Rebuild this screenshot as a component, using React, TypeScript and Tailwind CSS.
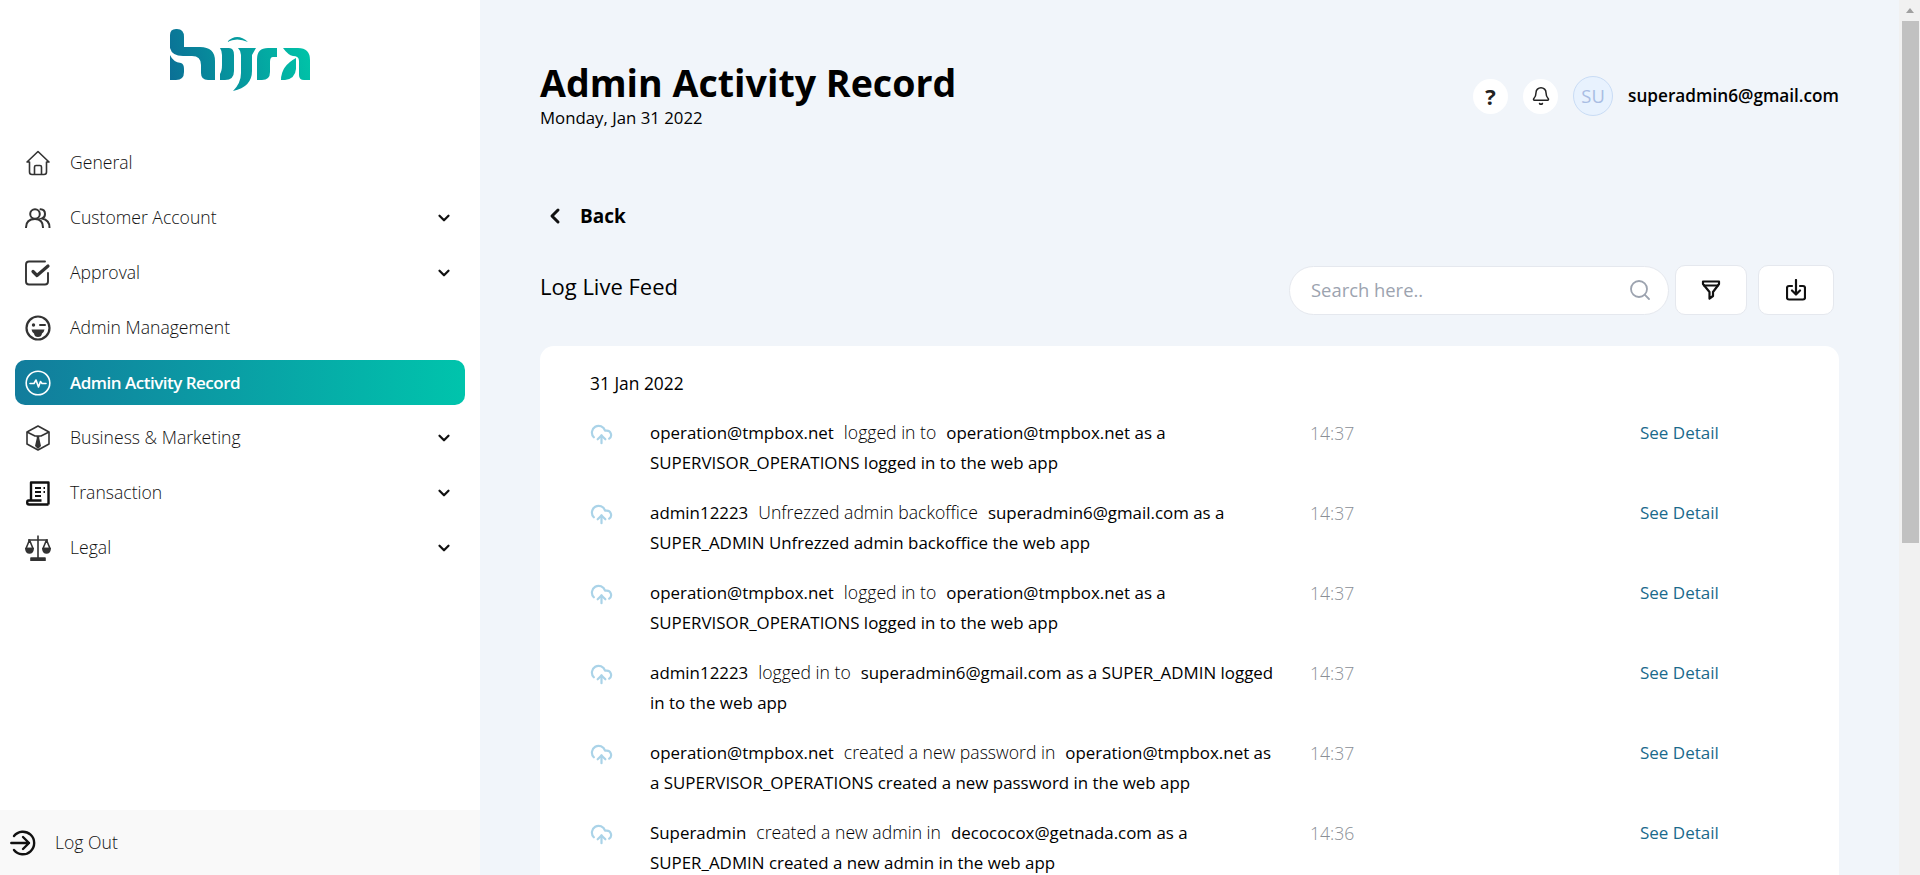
import { Bell, ChevronDown, ChevronLeft, CloudUpload, Search } from "lucide-react";
import type { ReactNode } from "react";

function Logo() {
  return (
    <svg width="140" height="62" viewBox="0 0 140 62" fill="url(#hijraGrad)">
      <defs>
        <linearGradient id="hijraGrad" gradientUnits="userSpaceOnUse" x1="0" y1="50" x2="140" y2="20">
          <stop offset="0" stopColor="#0b7096" />
          <stop offset="1" stopColor="#00c4a8" />
        </linearGradient>
      </defs>
      {/* h */}
      <path d="M0 6 Q0 0 6 0 L7 0 Q14 0 14 8 L14 18 L30 18 Q45 18 45 32 L45 51 L38 51 Q31 51 31 44 L31 36 Q31 27 22 27 L13 27 Q2 27 0 19 Z" />
      <path d="M0 26 Q3 33 11 34 Q14 35 14 40 L14 43 Q14 51 6 51 L0 51 Z" />
      {/* i */}
      <path d="M50 51 L50 45 Q52 42 52 36 L52 26 Q52 22 50 19 L59 19 Q64 19 64 26 L64 42 Q64 51 55 51 Z" />
      {/* dome */}
      <path d="M57 13 Q67 3 78 13 Q67 8 57 13 Z" />
      {/* j */}
      <path d="M68 19 L86 19 L82 26 L82 42 Q82 58 63 62 Q71 54 71 44 L71 26 Q71 22 68 19 Z" />
      {/* r */}
      <path d="M87 51 L87 30 Q87 19 98 19 L107 19 L107 28 L103 28 Q100 28 100 33 L100 43 Q100 51 92 51 Z" />
      {/* a */}
      <path d="M113 19 L128 19 Q140 19 140 31 L140 51 L134 51 Q129 51 129 46 L129 32 Q129 27 123 27 Q118 26 113 19 Z" />
      <path d="M111 51 Q111 37 126 29 L126 40 Q125 50 115 51 Z" />
    </svg>
  );
}

function HomeIcon() {
  return (
    <svg width="24" height="26" viewBox="0 0 24 26" fill="none" stroke="#333" strokeWidth="1.6" strokeLinejoin="round">
      <path d="M1 12 L12 1.5 L23 12 L20.5 12 L20.5 22 Q20.5 24.5 18 24.5 L6 24.5 Q3.5 24.5 3.5 22 L3.5 12 Z" />
      <path d="M8.5 24.5 L8.5 17 Q8.5 15.5 10 15.5 L14 15.5 Q15.5 15.5 15.5 17 L15.5 24.5" />
    </svg>
  );
}

function UsersIcon() {
  return (
    <svg width="26" height="20" viewBox="0 0 26 20" fill="none" stroke="#333" strokeWidth="2" strokeLinecap="round">
      <circle cx="10" cy="6" r="4.8" />
      <path d="M1 19.5 Q1 11 10 11 Q18 11 18 19.5" />
      <path d="M15.5 1.3 Q20 1.5 20 6 Q20 9.5 17 10.5 Q24.5 12 24.5 19.5" />
    </svg>
  );
}

function CheckBoxIcon() {
  return (
    <svg width="26" height="26" viewBox="0 0 26 26" fill="none" stroke="#333" strokeLinecap="round" strokeLinejoin="round">
      <path strokeWidth="1.9" d="M20 1.5 L4 1.5 Q1 1.5 1 4.5 L1 21.5 Q1 24.5 4 24.5 L20 24.5 Q23 24.5 23 21.5 L23 13" />
      <path strokeWidth="3.2" d="M8 11.5 L12 15.5 L23 6" />
    </svg>
  );
}

function WinkIcon() {
  return (
    <svg width="26" height="26" viewBox="0 0 26 26" fill="none" stroke="#333" strokeWidth="2.2">
      <circle cx="13" cy="13" r="11.5" />
      <circle cx="8.5" cy="10" r="1.7" fill="#333" stroke="none" />
      <path d="M15 10 L20 10" strokeWidth="2" strokeLinecap="round" />
      <path d="M6.5 14.5 L19.5 14.5 Q19 17.5 17 18.5 Q16.5 22 13 22 Q9.5 22 9 18.5 Q7 17.5 6.5 14.5 Z" fill="#333" stroke="none" />
    </svg>
  );
}

function PulseIcon() {
  return (
    <svg width="26" height="26" viewBox="0 0 26 26" fill="none" stroke="#fff" strokeWidth="1.6" strokeLinejoin="round" strokeLinecap="round">
      <circle cx="13" cy="13" r="11.8" />
      <path d="M5 13.5 L9 13.5 L11 10 L13.5 17 L15.5 11.5 L17 13.5 L21 13.5" />
    </svg>
  );
}

function CubeIcon() {
  return (
    <svg width="24" height="26" viewBox="0 0 24 26" fill="none" stroke="#333" strokeWidth="1.6" strokeLinejoin="round">
      <path d="M12 1 L23 7 L23 19 L12 25 L1 19 L1 7 Z" />
      <path d="M1 7 L9 11 L15 11 L23 7" />
      <path d="M10.5 11 L13.5 11 L13.2 13 L15 21 L12 24 L9 21 L10.8 13 Z" fill="#333" stroke="none" />
    </svg>
  );
}

function ReceiptIcon() {
  return (
    <svg width="24" height="26" viewBox="0 0 24 26" fill="none" stroke="#111" strokeWidth="2.4" strokeLinejoin="round">
      <path d="M5 20 L5 2.5 L22.5 2.5 L22.5 24.5" />
      <path d="M15.5 20.5 L2.5 20.5 Q1.2 20.5 1.2 22.5 Q1.2 24.5 3 24.5 L22.5 24.5" />
      <path d="M9 8 L15 8 M17.5 8 L19 8 M9 12 L15 12 M17.5 12 L19 12 M9 16 L15 16" strokeWidth="2" />
    </svg>
  );
}

function ScaleIcon() {
  return (
    <svg width="26" height="26" viewBox="0 0 26 26" fill="none" stroke="#333" strokeWidth="1.6" strokeLinejoin="round">
      <path d="M13 0.5 L13 23 M3 5 L23 5" />
      <path d="M6 23 L20 23 L20 25.5 L6 25.5 Z" fill="#333" />
      <path d="M4.5 5 L1 13.5 L8 13.5 Z M21.5 5 L18 13.5 L25 13.5 Z" />
      <path d="M0.8 13.5 Q1.2 18 4.5 18 Q7.8 18 8.2 13.5 Z M17.8 13.5 Q18.2 18 21.5 18 Q24.8 18 25.2 13.5 Z" fill="#333" />
    </svg>
  );
}

function LogOutIcon() {
  return (
    <svg width="26" height="26" viewBox="0 0 26 26" fill="none" stroke="#111" strokeWidth="2.4" strokeLinecap="round" strokeLinejoin="round">
      <path d="M4 6 A11.3 11.3 0 1 1 4 20" />
      <path d="M1.3 13 L19 13 M13 7 L19 13 L13 19" />
    </svg>
  );
}

function FunnelIcon() {
  return (
    <svg width="20" height="20" viewBox="0 0 20 20" fill="none" stroke="#111" strokeWidth="2.2" strokeLinejoin="round" strokeLinecap="round">
      <path d="M2 1.5 L18 1.5 L18 4 L12 12 L12 16 L8.5 18.5 L8.5 12 L2 4 Z" />
      <path d="M3 5.5 L17 5.5" />
    </svg>
  );
}

function DownloadIcon() {
  return (
    <svg width="20" height="22" viewBox="0 0 20 22" fill="none" stroke="#111" strokeWidth="2.2" strokeLinejoin="round" strokeLinecap="round">
      <path d="M6 7 L3 7 Q1 7 1 9 L1 18.5 Q1 20.5 3 20.5 L17 20.5 Q19 20.5 19 18.5 L19 9 Q19 7 17 7 L14 7" />
      <path d="M10 1 L10 15 M6 11.5 L10 15.5 L14 11.5" />
    </svg>
  );
}

type MenuItem = { label: string; icon: ReactNode; sub?: boolean; active?: boolean };

const menu: MenuItem[] = [
  { label: "General", icon: <HomeIcon /> },
  { label: "Customer Account", icon: <UsersIcon />, sub: true },
  { label: "Approval", icon: <CheckBoxIcon />, sub: true },
  { label: "Admin Management", icon: <WinkIcon /> },
  { label: "Admin Activity Record", icon: <PulseIcon />, active: true },
  { label: "Business & Marketing", icon: <CubeIcon />, sub: true },
  { label: "Transaction", icon: <ReceiptIcon />, sub: true },
  { label: "Legal", icon: <ScaleIcon />, sub: true },
];

const logs = [
  { who: "operation@tmpbox.net", action: "logged in to", rest: "operation@tmpbox.net as a SUPERVISOR_OPERATIONS logged in to the web app", time: "14:37" },
  { who: "admin12223", action: "Unfrezzed admin backoffice", rest: "superadmin6@gmail.com as a SUPER_ADMIN Unfrezzed admin backoffice the web app", time: "14:37" },
  { who: "operation@tmpbox.net", action: "logged in to", rest: "operation@tmpbox.net as a SUPERVISOR_OPERATIONS logged in to the web app", time: "14:37" },
  { who: "admin12223", action: "logged in to", rest: "superadmin6@gmail.com as a SUPER_ADMIN logged in to the web app", time: "14:37" },
  { who: "operation@tmpbox.net", action: "created a new password in", rest: "operation@tmpbox.net as a SUPERVISOR_OPERATIONS created a new password in the web app", time: "14:37" },
  { who: "Superadmin", action: "created a new admin in", rest: "decococox@getnada.com as a SUPER_ADMIN created a new admin in the web app", time: "14:36" },
];

export default function App() {
  return (
    <div className="flex h-screen overflow-hidden bg-[#f1f5fa] font-['Open_Sans',sans-serif] text-black">
      {/* Sidebar */}
      <aside className="flex w-[480px] shrink-0 flex-col bg-white">
        <div className="flex justify-center pt-[29px]">
          <Logo />
        </div>
        <nav className="mt-[49px] flex flex-col gap-[10px] px-[15px]">
          {menu.map((item) => (
            <div
              key={item.label}
              className={`flex h-[45px] items-center rounded-[10px] pl-[10px] pr-[12px] ${
                item.active ? "bg-gradient-to-r from-[#127c9c] to-[#00c4ac] text-white" : "text-[#111]"
              }`}
            >
              <div className="flex w-[26px] justify-center">{item.icon}</div>
              <span
                className={`ml-[19px] flex-1 ${
                  item.active ? "text-[17px] font-semibold tracking-[-0.5px]" : "text-[17.6px] font-light"
                }`}
              >
                {item.label}
              </span>
              {item.sub && <ChevronDown size={18} strokeWidth={3} className="text-[#111]" />}
            </div>
          ))}
        </nav>
        <div className="mt-auto flex h-[65px] items-center bg-[#f9f9f9] pl-[10px]">
          <LogOutIcon />
          <span className="ml-[19px] text-[17.6px] font-light text-[#111]">Log Out</span>
        </div>
      </aside>

      {/* Main */}
      <main className="min-w-0 flex-1 overflow-hidden pl-[60px] pr-[60px]">
        <header className="flex items-start justify-between pt-[58px]">
          <div>
            <h1 className="text-[37.6px] leading-[50px] font-bold">Admin Activity Record</h1>
            <p className="text-[16.8px] leading-[20px]">Monday, Jan 31 2022</p>
          </div>
          <div className="mt-[18px] flex items-center">
            <div className="flex h-[35px] w-[35px] items-center justify-center rounded-full bg-white">
              <span className="text-[22px] leading-none font-bold text-[#222]">?</span>
            </div>
            <div className="ml-[15px] flex h-[35px] w-[35px] items-center justify-center rounded-full bg-white">
              <Bell size={20} strokeWidth={1.8} className="text-[#222]" />
            </div>
            <div className="ml-[15px] flex h-[40px] w-[40px] items-center justify-center rounded-full border border-[#c9dcf5] bg-[#e8f2fe] text-[18.4px] text-[#a9bde3]">
              SU
            </div>
            <span className="ml-[15px] text-[17.2px] font-semibold">superadmin6@gmail.com</span>
          </div>
        </header>

        <div className="mt-[74px] flex h-[28px] items-center pl-[3px]">
          <ChevronLeft size={24} strokeWidth={3} className="text-[#111]" />
          <span className="ml-[13px] text-[19px] font-bold">Back</span>
        </div>

        <div className="mt-[35px] flex items-start justify-between">
          <h2 className="text-[22px] leading-[42px] font-normal">Log Live Feed</h2>
          <div className="flex items-center pr-[5px]">
            <div className="flex h-[49px] w-[380px] items-center justify-between rounded-full border border-[#e5e8ee] bg-white pl-[21px] pr-[16px]">
              <span className="text-[18.4px] text-[#9ca3af]">Search here..</span>
              <Search size={24} strokeWidth={1.8} className="text-[#9ca3af]" />
            </div>
            <button className="ml-[6px] flex h-[50px] w-[72px] items-center justify-center rounded-[10px] border border-[#e5e8ee] bg-white">
              <FunnelIcon />
            </button>
            <button className="ml-[11px] flex h-[50px] w-[76px] items-center justify-center rounded-[10px] border border-[#e5e8ee] bg-white">
              <DownloadIcon />
            </button>
          </div>
        </div>

        <section className="mt-[31px] rounded-t-[14px] bg-white px-[50px] pb-[60px] pt-[25px]">
          <div className="text-[17.4px] leading-[24px]">31 Jan 2022</div>
          <div className="mt-[23px] flex flex-col gap-[20px]">
            {logs.map((log, i) => (
              <div key={i} className="flex items-start text-[16.9px] leading-[30px]">
                <CloudUpload size={23} strokeWidth={2.3} className="mt-[5px] w-[23px] shrink-0 text-[#aad3e8]" />
                <p className="ml-[37px] w-[628px] shrink-0">
                  {log.who}
                  <span className="mx-[10px] text-[17.6px] leading-none font-light">{log.action}</span>
                  {log.rest}
                </p>
                <span className="ml-[32px] w-[330px] shrink-0 text-[17.6px] font-light text-[#8a8f96]">{log.time}</span>
                <span className="text-[17px] text-[#1a6a8c]">See Detail</span>
              </div>
            ))}
          </div>
        </section>
      </main>

      {/* Scrollbar */}
      <div className="flex w-[21px] shrink-0 flex-col items-center bg-[#f1f1f1]">
        <div className="flex h-[21px] items-center justify-center">
          <div className="h-0 w-0 border-x-[4.5px] border-b-[5px] border-x-transparent border-b-[#a0a0a0]" />
        </div>
        <div className="ml-[1px] h-[522px] w-[17px] bg-[#c1c1c1]" />
      </div>
    </div>
  );
}
